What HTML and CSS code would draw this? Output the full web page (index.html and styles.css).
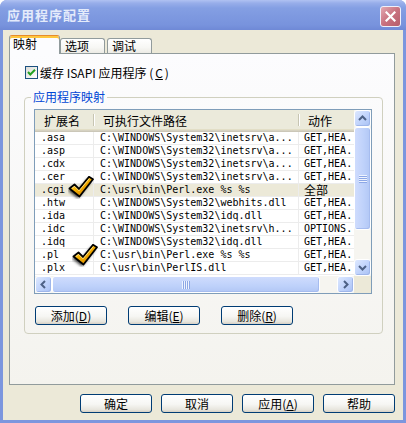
FILE: index.html
```html
<!DOCTYPE html>
<html lang="zh-CN">
<head>
  <meta charset="UTF-8" />
  <title>应用程序配置</title>
  <link rel="stylesheet" href="styles.css">
</head>
<body>
  <!-- shared paint for the check overlays -->
  <svg class="defs" width="0" height="0" aria-hidden="true">
    <defs>
      <linearGradient id="tickFill" x1="0" y1="0" x2="1" y2="1">
        <stop offset="0" stop-color="#ffe27a"/>
        <stop offset="0.45" stop-color="#f5b000"/>
        <stop offset="1" stop-color="#c97400"/>
      </linearGradient>
      <filter id="tickBlur" x="-40%" y="-40%" width="180%" height="180%">
        <feGaussianBlur stdDeviation="1.4"/>
      </filter>
      <symbol id="tick" viewBox="0 0 26 23">
        <path d="M1.5 12.5 L6.5 8.5 L11 13 L21 0.8 L25 3.2 L11.5 20.5 Z" transform="translate(-1.5 2)" fill="#000" opacity=".75" filter="url(#tickBlur)"/>
        <path d="M1.5 12.5 L6.5 8.5 L11 13 L21 0.8 L25 3.2 L11.5 20.5 Z" fill="url(#tickFill)" stroke="#000" stroke-width="1.8" stroke-linejoin="round"/>
        <path d="M4 12.3 L6.6 10.4 L11 14.8 L21.3 2.6" fill="none" stroke="#fff3b0" stroke-width=".9" opacity=".8"/>
      </symbol>
    </defs>
  </svg>

  <div class="window">
    <div class="titlebar">
      <span class="title">应用程序配置</span>
      <span class="close">
        <svg width="11" height="11" viewBox="0 0 11 11"><path d="M1.5 1.5 L9.5 9.5 M9.5 1.5 L1.5 9.5" stroke="#fff" stroke-width="2.2" stroke-linecap="square"/></svg>
      </span>
    </div>

    <div class="frame">
      <div class="tabs">
        <div class="tab active">映射</div>
        <div class="tab">选项</div>
        <div class="tab">调试</div>
      </div>

      <div class="panel">
        <label class="check">
          <span class="box"><svg width="11" height="11" viewBox="0 0 11 11"><path d="M2 5 L4.3 7.5 L9 2.8" fill="none" stroke="#21a121" stroke-width="2"/></svg></span>
          缓存 ISAPI 应用程序 (<u>C</u>)
        </label>

        <fieldset class="group">
          <legend>应用程序映射</legend>
          <div class="list">
            <div class="list-main">
              <div class="list-head">
                <div class="th c-ext">扩展名</div>
                <div class="th c-path">可执行文件路径</div>
                <div class="th c-act last">动作</div>
              </div>
              <div class="row"><div class="td c-ext">.asa</div><div class="td c-path">C:\WINDOWS\System32\inetsrv\a...</div><div class="td c-act">GET,HEA.</div></div>
              <div class="row"><div class="td c-ext">.asp</div><div class="td c-path">C:\WINDOWS\System32\inetsrv\a...</div><div class="td c-act">GET,HEA.</div></div>
              <div class="row"><div class="td c-ext">.cdx</div><div class="td c-path">C:\WINDOWS\System32\inetsrv\a...</div><div class="td c-act">GET,HEA.</div></div>
              <div class="row"><div class="td c-ext">.cer</div><div class="td c-path">C:\WINDOWS\System32\inetsrv\a...</div><div class="td c-act">GET,HEA.</div></div>
              <div class="row sel"><div class="td c-ext">.cgi</div><div class="td c-path">C:\usr\bin\Perl.exe %s %s</div><div class="td c-act"><span class="cjk">全部</span></div></div>
              <div class="row"><div class="td c-ext">.htw</div><div class="td c-path">C:\WINDOWS\System32\webhits.dll</div><div class="td c-act">GET,HEA.</div></div>
              <div class="row"><div class="td c-ext">.ida</div><div class="td c-path">C:\WINDOWS\System32\idq.dll</div><div class="td c-act">GET,HEA.</div></div>
              <div class="row"><div class="td c-ext">.idc</div><div class="td c-path">C:\WINDOWS\System32\inetsrv\h...</div><div class="td c-act">OPTIONS.</div></div>
              <div class="row"><div class="td c-ext">.idq</div><div class="td c-path">C:\WINDOWS\System32\idq.dll</div><div class="td c-act">GET,HEA.</div></div>
              <div class="row"><div class="td c-ext">.pl</div><div class="td c-path">C:\usr\bin\Perl.exe %s %s</div><div class="td c-act">GET,HEA.</div></div>
              <div class="row"><div class="td c-ext">.plx</div><div class="td c-path">C:\usr\bin\PerlIS.dll</div><div class="td c-act">GET,HEA.</div></div>
            </div>

            <div class="vscroll">
              <div class="sb-btn"><svg width="15" height="15" viewBox="0 0 15 15"><path d="M4 9 L7.5 5.5 L11 9" fill="none" stroke="#4d6185" stroke-width="2"/></svg></div>
              <div class="thumb v"><span class="grip v"></span></div>
              <div class="track"></div>
              <div class="sb-btn"><svg width="15" height="15" viewBox="0 0 15 15"><path d="M4 6 L7.5 9.5 L11 6" fill="none" stroke="#4d6185" stroke-width="2"/></svg></div>
            </div>
            <div class="hscroll">
              <div class="sb-btn"><svg width="15" height="15" viewBox="0 0 15 15"><path d="M9 4 L5.5 7.5 L9 11" fill="none" stroke="#4d6185" stroke-width="2"/></svg></div>
              <div class="thumb h"><span class="grip h"></span></div>
              <div class="track"></div>
              <div class="sb-btn"><svg width="15" height="15" viewBox="0 0 15 15"><path d="M6 4 L9.5 7.5 L6 11" fill="none" stroke="#4d6185" stroke-width="2"/></svg></div>
            </div>
            <div class="corner"></div>

            <svg class="tick tick-cgi" width="26" height="23"><use href="#tick"/></svg>
            <svg class="tick tick-pl" width="26" height="23"><use href="#tick"/></svg>
          </div>

          <div class="group-buttons">
            <button class="btn">添加(<u>D</u>)</button>
            <button class="btn">编辑(<u>E</u>)</button>
            <button class="btn">删除(<u>R</u>)</button>
          </div>
        </fieldset>
      </div>

      <div class="footer">
        <button class="btn">确定</button>
        <button class="btn">取消</button>
        <button class="btn">应用(<u>A</u>)</button>
        <button class="btn">帮助</button>
      </div>
    </div>
  </div>
</body>
</html>
```

FILE: styles.css
```css
/* Base */
* { box-sizing: border-box; }
body { margin: 0; background: #fff; font-family: "Noto Sans CJK SC", sans-serif; font-size: 12px; line-height: 14px; color: #000; }
.defs { position: absolute; width: 0; height: 0; }

/* Window frame (inactive Luna) */
.window { width: 406px; height: 423px; display: flex; flex-direction: column; background: #7c96de; border-radius: 7px 7px 0 0; overflow: hidden; }
.titlebar { height: 30px; flex: none; display: flex; align-items: center; justify-content: space-between; padding: 0 5px 0 7px;
  background: linear-gradient(#b0c2f2 0, #98aeea 3px, #849fe3 8px, #7e99e0 16px, #7893dd 25px, #6f89d6 30px); }
.title { color: #e4ebfb; font-weight: bold; font-size: 13px; letter-spacing: 1px; }
.close { width: 21px; height: 21px; margin-top: 2px; display: flex; align-items: center; justify-content: center; border: 1px solid #eef0fa; border-radius: 3px;
  background: linear-gradient(135deg, #e3a9b2, #c9727f 50%, #b65d6b); }

.frame { flex: 1; margin: 0 3px 3px; background: #ece9d8; padding: 5px 8px 7px 6px; display: flex; flex-direction: column; }

/* Tabs */
.tabs { display: flex; align-items: flex-end; height: 18px; flex: none; }
.tab { height: 15px; width: 45px; border: 1px solid #919b9c; border-bottom: 0; border-radius: 3px 3px 0 0; padding-left: 4px;
  background: linear-gradient(#fff, #f7f7f4 60%, #ecebe5); }
.tab:last-child { margin-left: 2px; }
.tab.active { height: 19px; width: 51px; margin-bottom: -1px; position: relative; z-index: 1; padding: 1px 0 0 3px; background: #fcfcfe;
  border-top-color: #e68b2c; box-shadow: inset 0 2px #ffc73c; }

.panel { flex: 1; border: 1px solid #919b9c; background: linear-gradient(#fcfcfe, #f4f3ee); padding-top: 12px; display: flex; flex-direction: column; }

/* Checkbox */
.check { display: flex; align-items: center; gap: 2px; margin-left: 15px; height: 13px; }
.box { width: 13px; height: 13px; flex: none; border: 1px solid #1c5180; background: linear-gradient(135deg, #dcdcd7, #fff); display: flex; align-items: center; justify-content: center; }

/* Group box */
.group { margin: 11px 11px 0 14px; padding: 5px 10px 8px 9px; border: 1px solid #d0d0bf; border-radius: 4px; min-width: 0; }
.group legend { padding: 0 2px; margin-left: -3px; color: #0046d5; line-height: 14px; }

/* List view */
.list { position: relative; display: grid; grid-template-columns: 319px 17px; grid-template-rows: 166px 17px; border: 1px solid #7f9db9; background: #fff; }
.list-main { overflow: hidden; }
.list-head { display: flex; height: 22px;
  background: linear-gradient(#ebeadb 0, #ebeadb 19px, #e2dec6 19px, #e2dec6 20px, #d6d2c2 20px, #d6d2c2 21px, #cbc7b8 21px); }
.th { position: relative; padding: 4px 0 0 9px; white-space: nowrap; }
.th::after { content: ""; position: absolute; right: 0; top: 4px; bottom: 6px; width: 1px; background: #c7c5b2; box-shadow: 1px 0 #fff; }
.th.last::after { display: none; }
.c-ext { width: 59px; flex: none; }
.c-path { width: 205px; flex: none; }
.c-act { width: 55px; flex: none; }

.row { display: flex; height: 13px; border-bottom: 1px solid #ececec; font-family: "DejaVu Sans Mono", monospace; font-size: 10px; line-height: 12px; }
.row.sel { background: #ece9d8; }
.td { padding-left: 6px; border-right: 1px solid #ececec; overflow-x: clip; overflow-y: visible; white-space: nowrap; }
.td:last-child { border-right: 0; padding-left: 5px; }
.cjk { font-family: "Noto Sans CJK SC", sans-serif; font-size: 12px; line-height: 12px; }

/* Scroll bars */
.vscroll { display: flex; flex-direction: column; background: #f6f5f0; }
.hscroll { display: flex; background: #f6f5f0; }
.corner { background: #ece9d8; }
.sb-btn { width: 17px; height: 17px; flex: none; display: flex; align-items: center; justify-content: center; border: 1px solid #fff; border-radius: 3px;
  background: linear-gradient(135deg, #dde8ff, #c0d3fb 55%, #a9c1f4); box-shadow: inset -1px -1px #9fb6ea; }
.thumb { display: flex; align-items: center; justify-content: center; border: 1px solid #fff; border-radius: 3px; box-shadow: inset -1px -1px #a6bcef; }
.thumb.v { height: 103px; background: linear-gradient(90deg, #cfdcfd, #bed1fa 60%, #b2c7f5); }
.thumb.h { width: 268px; background: linear-gradient(#cfdcfd, #bed1fa 60%, #b2c7f5); }
.track { flex: 1; }
.grip { width: 8px; height: 8px; }
.grip.v { background: repeating-linear-gradient(#eef3fe 0 1px, #8ca7e6 1px 2px); }
.grip.h { background: repeating-linear-gradient(90deg, #eef3fe 0 1px, #8ca7e6 1px 2px); }

/* Check overlays on the mapping rows */
.tick { position: absolute; }
.tick-cgi { left: 33px; top: 66px; }
.tick-pl { left: 37px; top: 134px; }

/* Buttons */
.group-buttons { display: flex; gap: 21px; margin-top: 12px; padding-left: 1px; }
.footer { display: flex; justify-content: flex-end; gap: 9px; margin-top: 9px; flex: none; }
.btn { width: 72px; height: 19px; padding: 0; border: 1px solid #003c74; border-radius: 3px; font: 12px/17px "Noto Sans CJK SC", sans-serif; color: #000;
  background: linear-gradient(#fff, #f6f6f3 55%, #e8e6de 85%, #d6d0c5); }
```
